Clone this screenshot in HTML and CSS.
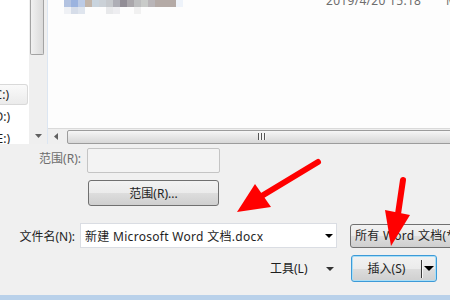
FILE: index.html
```html
<!DOCTYPE html>
<html lang="zh-CN">
<head>
    <meta charset="UTF-8">
    <meta name="viewport" content="width=device-width, initial-scale=1.0">
    <title>插入文件</title>
    <link rel="stylesheet" href="styles.css">
</head>
<body>
    <div class="window">
        <div class="browser">
            <div class="nav">
                <div class="nav-list">
                    <div class="nav-item selected">本地磁盘 (C:)</div>
                    <div class="nav-item">本地磁盘 (D:)</div>
                    <div class="nav-item">本地磁盘 (E:)</div>
                </div>
                <div class="vscroll">
                    <div class="vthumb"></div>
                    <div class="vdown">
                        <svg width="7" height="4" viewBox="0 0 7 4"><polygon points="0,0 7,0 3.5,4" fill="#606060"/></svg>
                    </div>
                </div>
            </div>
            <div class="files">
                <div class="file-row">
                    <div class="blur">
                        <div class="blur-top"></div>
                        <div class="blur-bottom"></div>
                    </div>
                    <span class="date">2019/4/20 15:18</span>
                    <span class="kind">Microsoft Word 文档</span>
                </div>
                <div class="hscroll">
                    <div class="hleft">
                        <svg width="4" height="7" viewBox="0 0 4 7"><polygon points="4,0 4,7 0,3.5" fill="#606060"/></svg>
                    </div>
                    <div class="hthumb">
                        <span class="grip"></span>
                    </div>
                </div>
            </div>
        </div>

        <div class="panel">
            <div class="row row-range">
                <label class="label label-range">范围(R):</label>
                <div class="field disabled"></div>
            </div>
            <div class="row row-range-btn">
                <button class="btn range-btn" type="button">范围(R)...</button>
            </div>
            <div class="row row-name">
                <label class="label label-name">文件名(N):</label>
                <div class="combo">
                    <span class="combo-text">新建 Microsoft Word 文档.docx</span>
                    <svg class="drop" width="8" height="4" viewBox="0 0 8 4"><polygon points="0,0 8,0 4,4" fill="#000"/></svg>
                </div>
                <div class="btn filter">所有 Word 文档(*.docx)</div>
            </div>
            <div class="row row-actions">
                <div class="tools">
                    <span>工具(L)</span>
                    <svg width="8" height="4" viewBox="0 0 8 4"><polygon points="0,0 8,0 4,4" fill="#333"/></svg>
                </div>
                <div class="split">
                    <span class="split-main">插入(S)</span>
                    <span class="split-line"></span>
                    <span class="split-drop">
                        <svg width="10" height="5" viewBox="0 0 10 5"><polygon points="0,0 10,0 5,5" fill="#000"/></svg>
                    </span>
                </div>
            </div>
        </div>
        <div class="taskbar"></div>

        <!-- red marks drawn over the dialog -->
        <svg class="marks" width="450" height="300" viewBox="0 0 450 300">
            <line x1="318" y1="162" x2="260" y2="197" stroke="#ff0000" stroke-width="6" stroke-linecap="round"/>
            <polygon points="237,212 255,184 271,207" fill="#ff0000"/>
            <line x1="403" y1="180" x2="398" y2="214" stroke="#ff0000" stroke-width="6" stroke-linecap="round"/>
            <polygon points="391,246 385,210 410,215" fill="#ff0000"/>
        </svg>
    </div>
</body>
</html>
```

FILE: styles.css
```css
body { margin: 0; font-family: "Noto Sans", "Noto Sans CJK SC", sans-serif; font-size: 12px; color: #1e1e1e; }
.window { position: relative; width: 450px; height: 300px; overflow: hidden; background: #f0f0f0; }

/* file browser part */
.browser { display: flex; height: 144px; }
.nav { display: flex; width: 47px; border-right: 1px solid #dce6f2; background: #fff; }
.nav-list { width: 29px; padding-top: 84px; overflow: hidden; }
.nav-item {
    display: flex; justify-content: flex-end; align-items: center;
    height: 22px; width: 28px; padding-right: 18px; box-sizing: border-box;
    white-space: nowrap; line-height: 14px;
}
.nav-item.selected {
    height: 21px; margin-bottom: 1px;
    border: 1px solid #d9d9d9; border-left: none; border-radius: 0 3px 3px 0;
    background: linear-gradient(#fafafa, #ebebeb);
}
.vscroll { display: flex; flex-direction: column; justify-content: space-between; width: 18px; background: #efefef; }
.vthumb {
    width: 14px; height: 55px; margin-left: 1px; box-sizing: border-box;
    border: 1px solid #a3a3a3; border-top: none; border-radius: 0 0 2px 2px;
    background: linear-gradient(to right, #f1f1f1, #dadada);
}
.vdown { display: flex; justify-content: center; align-items: center; height: 16px; }

.files { flex: 1; min-width: 0; display: flex; flex-direction: column; justify-content: space-between; background: #fdfdfd; }
.file-row { display: flex; padding-left: 16px; height: 14px; overflow: hidden; }
.blur { width: 262px; flex: none; }
.blur-top {
    height: 7px; width: 119px;
    background: linear-gradient(to right,
        #b3c3e1 0 7px, #9bb3df 7px 14px, #bccbe6 14px 21px, #c2b5aa 21px 28px,
        #c9d4de 28px 35px, #cbd1d7 35px 42px, #c6c9cd 42px 49px, #aeaeb6 49px 56px,
        #928e96 56px 63px, #aaa7ab 63px 70px, #bdbebf 70px 77px, #c9cbc9 77px 84px,
        #b9b5b8 84px 91px, #b4aaa6 91px 112px, #eef3fa 112px 119px);
}
.blur-bottom {
    height: 7px; width: 77px;
    background: linear-gradient(to right,
        #eff1f5 0 7px, #d6dde9 7px 14px, #dfe5ee 14px 21px, #fdfdfd 21px 42px,
        #e8e9eb 42px 49px, #eeeef1 49px 56px, #fdfdfd 56px 70px, #f1f1f1 70px 77px);
}
.date { flex: none; width: 120px; margin-top: -5px; line-height: 12px; color: #6d6d6d; white-space: nowrap; letter-spacing: 0.3px; }
.kind { flex: none; margin-top: -5px; line-height: 12px; color: #6d6d6d; white-space: nowrap; }

.hscroll { display: flex; align-items: center; height: 16px; background: #efefef; border-top: 1px solid #dadada; box-sizing: border-box; }
.hleft { flex: none; display: flex; justify-content: center; align-items: center; width: 16px; height: 15px; }
.hthumb {
    display: flex; justify-content: center; align-items: center;
    flex: 1; height: 14px; margin-left: 3px; margin-right: -6px;
    border: 1px solid #9c9c9c; border-radius: 2px; box-sizing: border-box;
    background: linear-gradient(#f6f6f6, #e6e6e6 50%, #d7d7d7);
}
.grip {
    width: 8px; height: 7px;
    background: repeating-linear-gradient(to right, #555 0 1px, #f4f4f4 1px 3px);
}

/* lower panel */
.panel { height: 151px; padding-top: 4px; box-sizing: border-box; }
.row { display: flex; align-items: center; }
.label { flex: none; text-align: right; white-space: nowrap; line-height: 16px; }
.row-range { height: 25px; }
.label-range { width: 81px; margin-right: 6px; margin-top: -4px; color: #6d6d6d; }
.field.disabled {
    flex: none; width: 133px; height: 25px; box-sizing: border-box;
    border: 1px solid #c4c4c4; border-radius: 2px; background: #f3f3f3;
}
.btn {
    font-family: inherit; font-size: 12px; color: #1e1e1e;
    border: 1px solid #707070; border-radius: 3px; box-sizing: border-box;
    background: linear-gradient(#f2f2f2, #ebebeb 50%, #dddddd 51%, #cfcfcf);
}
.row-range-btn { margin-top: 7px; }
.range-btn { width: 131px; height: 26px; margin-left: 88px; padding: 0; }

.row-name { margin-top: 17px; height: 25px; }
.label-name { width: 75px; margin-right: 5px; margin-top: 3px; }
.combo {
    flex: none; display: flex; justify-content: space-between; align-items: center;
    width: 257px; height: 25px; padding: 0 3px 0 4px; box-sizing: border-box;
    border: 1px solid #dadde3; background: #fff;
}
.combo-text { white-space: nowrap; line-height: 16px; margin-top: 3px; letter-spacing: 0.3px; }
.filter {
    flex: none; width: 110px; height: 24px; margin-left: 13px; padding-left: 4px;
    display: flex; align-items: center; white-space: nowrap; overflow: hidden; line-height: 16px;
    letter-spacing: 0.3px;
}

.row-actions { margin-top: 7px; height: 27px; }
.tools { flex: none; display: flex; justify-content: space-between; align-items: center; width: 64px; margin-left: 270px; line-height: 16px; }
.split {
    flex: none; display: flex; align-items: center; width: 86px; height: 27px; margin-left: 17px; box-sizing: border-box;
    border: 1px solid #3c9ad8; border-radius: 3px;
    box-shadow: inset 0 0 0 1px #a9def6;
    background: linear-gradient(#f2f2f2, #ebebeb 50%, #dddddd 51%, #cfcfcf);
}
.split-main { width: 69px; text-align: center; line-height: 16px; }
.split-line { width: 1px; height: 18px; background: #3a3a3a; box-shadow: 1px 0 0 #f8f8f8; }
.split-drop { flex: 1; display: flex; justify-content: center; }

.taskbar { height: 5px; background: #b9d1ea; }
.marks { position: absolute; left: 0; top: 0; pointer-events: none; }
```
